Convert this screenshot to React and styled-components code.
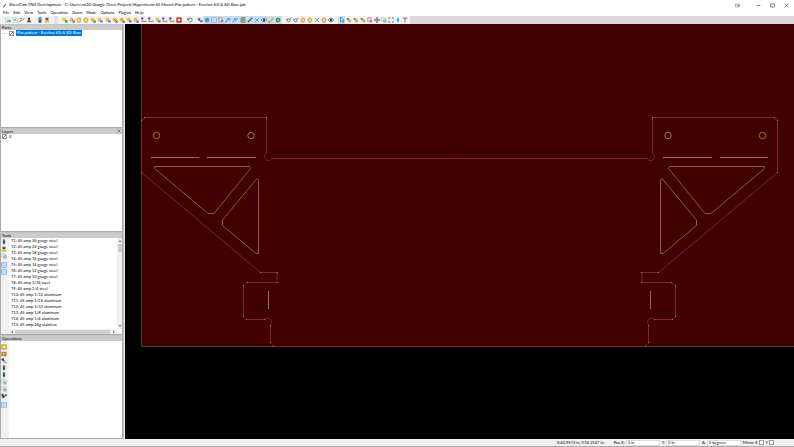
import React from "react";
import styled, { createGlobalStyle, css } from "styled-components";

const GlobalStyle = createGlobalStyle`
  * {
    box-sizing: border-box;
  }
  body {
    margin: 0;
    background: #f0f0f0;
  }
  button,
  input {
    font: inherit;
    color: inherit;
    margin: 0;
    padding: 0;
    border: 0;
    background: none;
  }
`;

const Window = styled.div`
  display: flex;
  flex-direction: column;
  height: 100vh;
  font-family: "Liberation Sans Narrow", Lato, sans-serif;
  font-size: 4px;
  line-height: 6px;
  color: #000;
  background: #f0f0f0;
  overflow: hidden;
  white-space: nowrap;
`;

const TitleBar = styled.header`
  display: flex;
  align-items: center;
  height: 10px;
  padding: 0 5px 0 2px;
  gap: 2px;
  background: #fff;
`;

const Title = styled.h1`
  flex: 1;
  margin: 0;
  font-size: 4px;
  font-weight: 400;
`;

const WindowButtons = styled.div`
  display: flex;
  gap: 9px;
`;

const WindowButton = styled.button`
  display: flex;
  width: 5px;
  height: 5px;
  margin-right: ${({ $apart }) => ($apart ? 7 : 0)}px;
`;

const MenuBar = styled.nav`
  display: flex;
  align-items: center;
  gap: 4px;
  height: 6px;
  padding-left: 3px;
  background: #fff;
`;

const MenuItem = styled.button`
  line-height: 6px;
`;

const ToolBar = styled.div`
  display: flex;
  height: 8px;
  background: #d9d9d9;
`;

const ToolStrip = styled.div`
  display: flex;
  gap: 3px;
  padding: 0 1px 0 4px;
  background: #f2f2f2;
`;

const ToolGroup = styled.div`
  display: grid;
  grid-auto-flow: column;
  grid-auto-columns: 1fr;
  width: ${({ $width }) => $width}px;
`;

const IconButton = styled.button`
  display: flex;
  align-items: center;
  justify-content: center;
  height: 8px;
  ${({ $active }) =>
    $active &&
    css`
      background: #c5e0f5;
    `}
`;

const Spacer = styled.span`
  width: 4px;
  background: #e2e2e2;
`;

const Glyph = styled.svg`
  display: block;
  flex: none;
  width: ${({ $size }) => $size || 6}px;
  height: ${({ $size }) => $size || 6}px;
`;

const Main = styled.main`
  flex: 1;
  display: flex;
  min-height: 0;
`;

const Sidebar = styled.aside`
  display: grid;
  grid-template-rows: repeat(4, minmax(0, 1fr));
  gap: 1px;
  width: 125px;
  padding: 1px 1px 0 0;
  background: #c4c4c4;
  border-right: 1px solid #e8e8e8;
`;

const Panel = styled.section`
  display: flex;
  flex-direction: column;
  min-height: 0;
  border: 1px solid #aaa;
  border-top: 0;
`;

const PanelHeader = styled.div`
  display: flex;
  align-items: center;
  justify-content: space-between;
  height: 5px;
  padding: 0 0 0 1px;
  background: #cbcbcb;
`;

const PanelTitle = styled.h2`
  margin: 0;
  font-size: 4px;
  line-height: 5px;
  font-weight: 400;
`;

const PanelBody = styled.div`
  flex: 1;
  display: flex;
  min-height: 0;
  background: #fff;
`;

const TreeRow = styled.label`
  display: flex;
  align-items: center;
  gap: 2px;
  height: 6px;
  padding-left: ${({ $indent }) => $indent}px;
`;

const TreeBranch = styled.span`
  width: 4px;
  border-top: 1px dotted #ccc;
`;

const CheckBox = styled.input.attrs({ type: "checkbox" })`
  appearance: none;
  flex: none;
  width: 5px;
  height: 5px;
  border: 1px solid #999;
  background: #fff;
  &:checked {
    background: linear-gradient(135deg, #fff 45%, #777 45%, #777 65%, #fff 65%);
  }
`;

const Selected = styled.span`
  padding: 0 1px;
  color: #fff;
  background: #0078d7;
`;

const SideTools = styled.div`
  display: flex;
  flex-direction: column;
  width: 8px;
  padding-top: ${({ $top }) => $top}px;
  background: #f0f0f0;
`;

const SideButton = styled(IconButton)`
  width: 6px;
  height: 7px;
  margin-top: ${({ $spaced }) => ($spaced ? 2 : 0)}px;
`;

const ListArea = styled.div`
  flex: 1;
  display: grid;
  grid-template-columns: minmax(0, 1fr) 5px;
  grid-template-rows: minmax(0, 1fr) 5px;
`;

const ToolList = styled.ul`
  margin: 0;
  padding: 0 0 0 2px;
  list-style: none;
  overflow: hidden;
`;

const ToolRow = styled.li`
  height: 6px;
`;

const ScrollBar = styled.div`
  display: flex;
  flex-direction: ${({ $vertical }) => ($vertical ? "column" : "row")};
  align-items: center;
  gap: 1px;
  padding: ${({ $vertical }) => ($vertical ? "1px 0" : "0 1px")};
  background: #f0f0f0;
`;

const Thumb = styled.div`
  width: ${({ $vertical }) => ($vertical ? "4px" : "90%")};
  height: ${({ $vertical }) => ($vertical ? "8px" : "4px")};
  margin-right: ${({ $vertical }) => ($vertical ? 0 : "auto")};
  margin-bottom: ${({ $vertical }) => ($vertical ? "auto" : 0)};
  background: #cdcdcd;
`;

const Canvas = styled.div`
  flex: 1;
  min-width: 0;
  background: #000;
`;

const Drawing = styled.svg`
  display: block;
  width: 100%;
  height: 100%;
`;

const StatusBar = styled.footer`
  display: flex;
  align-items: center;
  justify-content: flex-end;
  gap: 2px;
  height: 8px;
  padding-right: 20px;
  border-bottom: 1px solid #aaa;
`;

const Position = styled.span`
  width: 55px;
`;

const Field = styled.label`
  display: flex;
  align-items: center;
  gap: 1px;
`;

const FieldInput = styled.input`
  width: 34px;
  height: 6px;
  padding-left: 1px;
  background: #fff;
  border: 1px solid #ddd;
  line-height: 4px;
`;

const shapes = {
  app: <path d="M2 14L12 2l2 2L6 14z" fill="#555" />,
  open: <g><path d="M1 3h8l3 3v8H1z" fill="#e8f4ea" stroke="#8ab" /><path d="M5 9h7V6l4 5-4 4v-3H5z" fill="#36a64f" /></g>,
  save: <g><path d="M3 1h8l3 3v11H3z" fill="#fff" stroke="#789" /><path d="M5 6h6M5 9h6" stroke="#3aa45a" strokeWidth="2" /></g>,
  curve: <path d="M2 14C4 4 8 14 14 3M3 4h5" stroke="#555" fill="none" strokeWidth="2" />,
  person: <path d="M8 1a4 4 0 0 1 2 7l4 6H2l4-6a4 4 0 0 1 2-7z" fill="#444" />,
  device: <g><path d="M4 1h8v14H4z" fill="#456" /><path d="M6 3h4v4H6z" fill="#9bd" /></g>,
  lamp: <g><path d="M4 2h8v7H4z" fill="#556" /><path d="M2 10h12v5H2z" fill="#e3b83a" /></g>,
  goldGreen: <g><path d="M1 2h9v9H1z" fill="#e9c34b" /><path d="M8 8h7v7H8z" fill="#5a9e4c" /></g>,
  goldBlue: <g><path d="M2 2h8l2 4-4 5H2z" fill="#e6bd45" /><path d="M8 9h7v5H8z" fill="#467bb0" /></g>,
  linked: <g><path d="M2 3l5-1 3 5-4 4-4-3z" fill="#667" /><path d="M8 9h7v5H8z" fill="#467bb0" /></g>,
  gold: <g><path d="M8 1l6 5-3 8H4L2 6z" fill="#e6bd45" stroke="#a9852b" /><path d="M6 6h4v4H6z" fill="#fff3bd" /></g>,
  goldDark: <g><path d="M2 3l7-2 4 6-5 6-6-3z" fill="#e2b844" /><path d="M9 9l5 5M14 9v5H9" stroke="#444" strokeWidth="2" fill="none" /></g>,
  nodes: <g><path d="M3 3v9h10" stroke="#476d96" strokeWidth="2" fill="none" /><path d="M1 1h5v5H1z" fill="#537" /><path d="M10 9h5v5h-5z" fill="#dcae34" /></g>,
  stop: <g><path d="M1 1h14v14H1z" fill="#d92525" /><path d="M5 5h6v6H5z" fill="#fff" /></g>,
  undo: <path d="M4 3h6c5 1 5 7 1 9l-4 2M2 3v5h5" stroke="#444" fill="none" strokeWidth="2" />,
  globe: <g><circle cx="8" cy="8" r="6" fill="#6aaed0" stroke="#47789e" /><path d="M4 5l5-1 2 5-4 3z" fill="#5a9a59" /></g>,
  grid: <g><path d="M1 2h14v12H1z" fill="#e4f0fb" stroke="#6ba4d6" strokeWidth="2" /><path d="M2 8h12M6 3v10" stroke="#74aada" /></g>,
  redPage: <g><path d="M2 2h9v11H2z" fill="#f5dbe4" stroke="#b87993" strokeWidth="2" /><path d="M8 8l6 6M14 8l-6 6" stroke="#c54a5c" strokeWidth="2" /></g>,
  path: <path d="M1 13h3L7 4h3l1 5 4-6" stroke="#3878b0" fill="none" strokeWidth="2" />,
  box: <path d="M3 2h10v12H3zM6 5h4v6H6z" stroke="#52664a" fill="#e5ebcf" strokeWidth="2" />,
  diagonal: <path d="M2 14L14 2" stroke="#4a5546" fill="none" strokeWidth="3" />,
  cross: <path d="M2 14L14 2M3 4l9 8" stroke="#2c9b87" fill="none" strokeWidth="2" />,
  eye: <g><path d="M1 8c3-6 11-6 14 0-3 6-11 6-14 0z" fill="#fff" stroke="#345" strokeWidth="2" /><circle cx="8" cy="8" r="3" fill="#234" /></g>,
  pencil: <g><path d="M3 13L12 3l2 3-8 8z" fill="#e69c35" stroke="#e69c35" /><path d="M2 10l3 5H1z" fill="#7b5a3a" /></g>,
  green: <g><path d="M2 4l6-3 6 3v8l-6 3-6-3z" fill="#57994b" /><path d="M6 6h4v4H6z" fill="#b6da8b" /></g>,
  zoomIn: <g><circle cx="7" cy="9" r="4" fill="none" stroke="#555" strokeWidth="2" /><path d="M10 6l4-4M3 5L1 8" stroke="#555" strokeWidth="2" /></g>,
  fit: <g><path d="M2 2l12 12M14 2L2 14" stroke="#667" strokeWidth="2" /><path d="M6 6h4v4H6z" fill="#9ab" /></g>,
  pointer: <path d="M4 1v12l3-3 3 5 2-1-2-5h4z" fill="#fff" stroke="#256aa5" strokeWidth="2" />,
  goldPointer: <g><path d="M1 2l7 2-4 5z" fill="#8c6521" /><path d="M6 6l7 2-1 6-5-2z" fill="#e4b93f" stroke="#7a6428" /></g>,
  move: <path d="M8 1v14M1 8h14M6 3l2-2 2 2M6 13l2 2 2-2M3 6L1 8l2 2M13 6l2 2-2 2" stroke="#444" fill="none" strokeWidth="2" />,
  pages: <g><path d="M1 2h10v8H1z" fill="#e8f2f5" stroke="#89a" /><path d="M7 7h7v7H7z" fill="#9ccdb4" stroke="#799" /></g>,
  expand: <path d="M6 2H2v4M10 2h4v4M2 10v4h4M14 10v4h-4" stroke="#477a8d" fill="none" strokeWidth="2" />,
  cyan: <path d="M6 2h4v4l2 2-4 7-4-7 2-2z" fill="#18bcd0" />,
  tee: <path d="M2 3h12M8 3v12" stroke="#555" strokeWidth="2" fill="none" />,
  torch: <g><path d="M5 1h6v9l-3 5-3-5z" fill="#345" /><path d="M6 4h4v2H6z" fill="#9ac" /></g>,
  orange: <g><path d="M1 2h14v12H1z" fill="#d4a82b" stroke="#a27b19" /><path d="M4 5h8v6H4z" fill="#fff0aa" /></g>,
  brown: <g><path d="M1 2h14v12H1z" fill="#b28a20" /><path d="M4 5h8v5H4z" fill="#d8bd64" /></g>,
  drill: <g><path d="M1 1h7v4l3 4H7L2 6z" fill="#444" /><path d="M9 10h6v4H9z" fill="#c99b2a" /></g>,
  flag: <path d="M2 2h5v5h4V3h4v4l-5 2-3 5H4V9H1z" fill="#333" />,
  min: <path d="M2 8h12" stroke="#444" strokeWidth="2" />,
  max: <path d="M2 3h12v10H2z" stroke="#444" strokeWidth="2" fill="none" />,
  close: <path d="M2 2l12 12M14 2L2 14" stroke="#333" strokeWidth="2" />,
  screen: <g><path d="M1 4h14v8H1z" stroke="#777" strokeWidth="2" fill="none" /><path d="M8 7h5v3H8z" fill="#666" /></g>,
  up: <path d="M2 11l6-6 6 6z" fill="#555" />,
  down: <path d="M2 5l6 6 6-6z" fill="#555" />,
  left: <path d="M11 2L5 8l6 6z" fill="#555" />,
  right: <path d="M5 2l6 6-6 6z" fill="#555" />,
};

const menus = ["File", "Edit", "View", "Tools", "Operation", "Zoom", "Mode", "Options", "Plugins", "Help"];

const toolGroups = [
  { width: 29, icons: ["open", "save", "curve", "person"] },
  { width: 15, icons: ["device", "lamp"] },
  {
    width: 122,
    offset: true,
    icons: ["goldGreen", "goldDark", "gold", "gold", "goldDark", "goldBlue", "goldBlue", "goldDark", "goldDark",
      "goldBlue", "goldDark", "nodes", "nodes", "goldBlue", "nodes", "nodes", "stop"],
  },
  { width: 7, icons: ["undo"] },
  {
    width: 86,
    from: 1,
    icons: ["linked", "globe", "grid", "redPage", "path", "path", "box", "diagonal", "cross", "eye", "pencil", "green"],
  },
  { width: 50, icons: ["zoomIn", "zoomIn", "gold", "gold", "fit", "gold", "eye"] },
  {
    width: 71,
    from: 0,
    to: 0,
    icons: ["pointer", "goldPointer", "goldPointer", "goldPointer", "redPage", "move", "pages", "expand", "cyan", "tee"],
  },
];

const tools = [
  "T1: 45 amp 26 gauge steel",
  "T2: 45 amp 22 gauge steel",
  "T3: 45 amp 18 gauge steel",
  "T4: 45 amp 16 gauge steel",
  "T5: 45 amp 14 gauge steel",
  "T6: 45 amp 12 gauge steel",
  "T7: 45 amp 10 gauge steel",
  "T8: 45 amp 3/16 steel",
  "T9: 45 amp 1/4 steel",
  "T10: 45 amp 1/32 aluminum",
  "T11: 45 amp 1/16 aluminum",
  "T12: 45 amp 3/32 aluminum",
  "T13: 45 amp 1/8 aluminum",
  "T14: 45 amp 1/4 aluminum",
  "T15: 45 amp 26g stainless",
  "T16: 45 amp 22g stainless",
];

const toolActions = ["torch", "lamp", "pages", "grid", "grid"];
const operationActions = ["orange", "brown", "drill", "torch", "torch", "pages", "pages", "flag", "grid"];

// end points of the segments, drawn as lighter dots
const nodes = [
  [141, 120], [144, 117], [266, 117], [260, 272], [277, 272], [277, 282], [247, 282], [243, 285], [243, 316],
  [246, 319], [264, 319], [270, 325], [270, 342], [273, 346], [151, 157], [198, 157], [207, 157], [255, 157],
  [268, 291], [268, 308], [141, 172],
];

const Icon = ({ name, size }) => (
  <Glyph viewBox="0 0 16 16" $size={size} aria-hidden="true">
    {shapes[name]}
  </Glyph>
);

const Bracket = () => (
  <g fill="none">
    <path
      stroke="#84222a"
      d="M141.5 172.5V120.5L145 117.5H266.5V153.5C263 156 264 160 268 160.5C270 160.5 271.5 160 271.5 158.5H459.5"
    />
    <path
      stroke="#84222a"
      d="M141.5 172.5L260.5 272.5H277V282.5H247L243.5 285.5V316.5L246.5 319.5H264.5C266 317.5 271 318 271.5 321.5C272 323.5 270.5 324 270.5 325.5V343L274 346.5H459.5"
    />
    <g stroke="#8a6410">
      <path d="M154.5 166.5H249.5L250.5 168.5L214 213.5H208L154.5 168.5Z" />
      <path d="M257 178.5L258.5 180V253.5H256L222.5 225.5V220Z" />
      <circle cx="156.5" cy="135.5" r="3.2" stroke="#a87a18" />
      <circle cx="251" cy="135.5" r="3.2" stroke="#a87a18" />
    </g>
    <path stroke="#9a6868" d="M151 157.5H199M207 157.5H255M268.5 291.5V308.5" />
    {nodes.map(([x, y]) => (
      <rect key={`${x}-${y}`} x={x} y={y} width="1" height="1" fill="#b87070" />
    ))}
  </g>
);

const PartView = () => (
  <Drawing viewBox="125 24 669 415" preserveAspectRatio="xMinYMin slice" role="img" aria-label="Part drawing">
    <path d="M141 24H794V347H141z" fill="#400000" />
    <path d="M141.5 24V346.5H794" fill="none" stroke="#5c3636" />
    <Bracket />
    <g transform="translate(919 0) scale(-1 1)">
      <Bracket />
    </g>
  </Drawing>
);

const DockPanel = ({ title, closable, children }) => (
  <Panel>
    <PanelHeader>
      <PanelTitle>{title}</PanelTitle>
      {closable && (
        <WindowButton aria-label={`Close ${title}`}>
          <Icon name="close" size={4} />
        </WindowButton>
      )}
    </PanelHeader>
    <PanelBody>{children}</PanelBody>
  </Panel>
);

const SideActions = ({ icons, spacedAt, top = 1 }) => (
  <SideTools $top={top}>
    {icons.map((name, i) => (
      <SideButton key={i} $spaced={i === spacedAt} aria-label={name}>
        <Icon name={name} />
      </SideButton>
    ))}
  </SideTools>
);

const App = () => (
  <>
    <GlobalStyle />
    <Window>
      <TitleBar>
        <Icon name="app" size={5} />
        <Title>
          SheetCam TNG Development - C:\Users\rat20\Google Drive\Projects\Hypertherm 65 Mount\Flat pattern - Everlast 63i
          &amp; 82i Base.job
        </Title>
        <WindowButtons>
          {["screen", "min", "max", "close"].map((name) => (
            <WindowButton key={name} $apart={name === "screen"} aria-label={name}>
              <Icon name={name} size={5} />
            </WindowButton>
          ))}
        </WindowButtons>
      </TitleBar>
      <MenuBar>
        {menus.map((menu) => (
          <MenuItem key={menu}>{menu}</MenuItem>
        ))}
      </MenuBar>
      <ToolBar>
        <ToolStrip>
          {toolGroups.map(({ width, icons, offset, from = 99, to = 99 }, g) => (
            <React.Fragment key={g}>
              {offset && <Spacer />}
              <ToolGroup $width={width}>
                {icons.map((name, i) => (
                  <IconButton key={i} $active={i >= from && i <= to} aria-label={name}>
                    <Icon name={name} />
                  </IconButton>
                ))}
              </ToolGroup>
            </React.Fragment>
          ))}
        </ToolStrip>
      </ToolBar>
      <Main>
        <Sidebar>
          <DockPanel title="Parts">
            <TreeRow $indent={2}>
              <TreeBranch />
              <CheckBox defaultChecked />
              <Selected>Flat pattern - Everlast 63i &amp; 82i Base</Selected>
            </TreeRow>
          </DockPanel>
          <DockPanel title="Layers" closable>
            <TreeRow $indent={1}>
              <CheckBox defaultChecked />0
            </TreeRow>
          </DockPanel>
          <DockPanel title="Tools">
            <SideActions icons={toolActions} spacedAt={3} />
            <ListArea>
              <ToolList>
                {tools.map((tool) => (
                  <ToolRow key={tool}>{tool}</ToolRow>
                ))}
              </ToolList>
              <ScrollBar $vertical>
                <Icon name="up" size={4} />
                <Thumb $vertical />
                <Icon name="down" size={4} />
              </ScrollBar>
              <ScrollBar>
                <Icon name="left" size={4} />
                <Thumb />
                <Icon name="right" size={4} />
              </ScrollBar>
            </ListArea>
          </DockPanel>
          <DockPanel title="Operations">
            <SideActions icons={operationActions} spacedAt={8} top={2} />
          </DockPanel>
        </Sidebar>
        <Canvas>
          <PartView />
        </Canvas>
      </Main>
      <StatusBar>
        <Position>X:40.9572 in, Y:16.2147 in</Position>
        <Field>
          Pos X:
          <FieldInput defaultValue="0 in" />
        </Field>
        <Field>
          Y:
          <FieldInput defaultValue="0 in" />
        </Field>
        <Field>
          A:
          <FieldInput defaultValue="0 degrees" />
        </Field>
        <Field>
          Mirror X
          <CheckBox />
        </Field>
        <Field>
          Y
          <CheckBox />
        </Field>
      </StatusBar>
    </Window>
  </>
);

export default App;
